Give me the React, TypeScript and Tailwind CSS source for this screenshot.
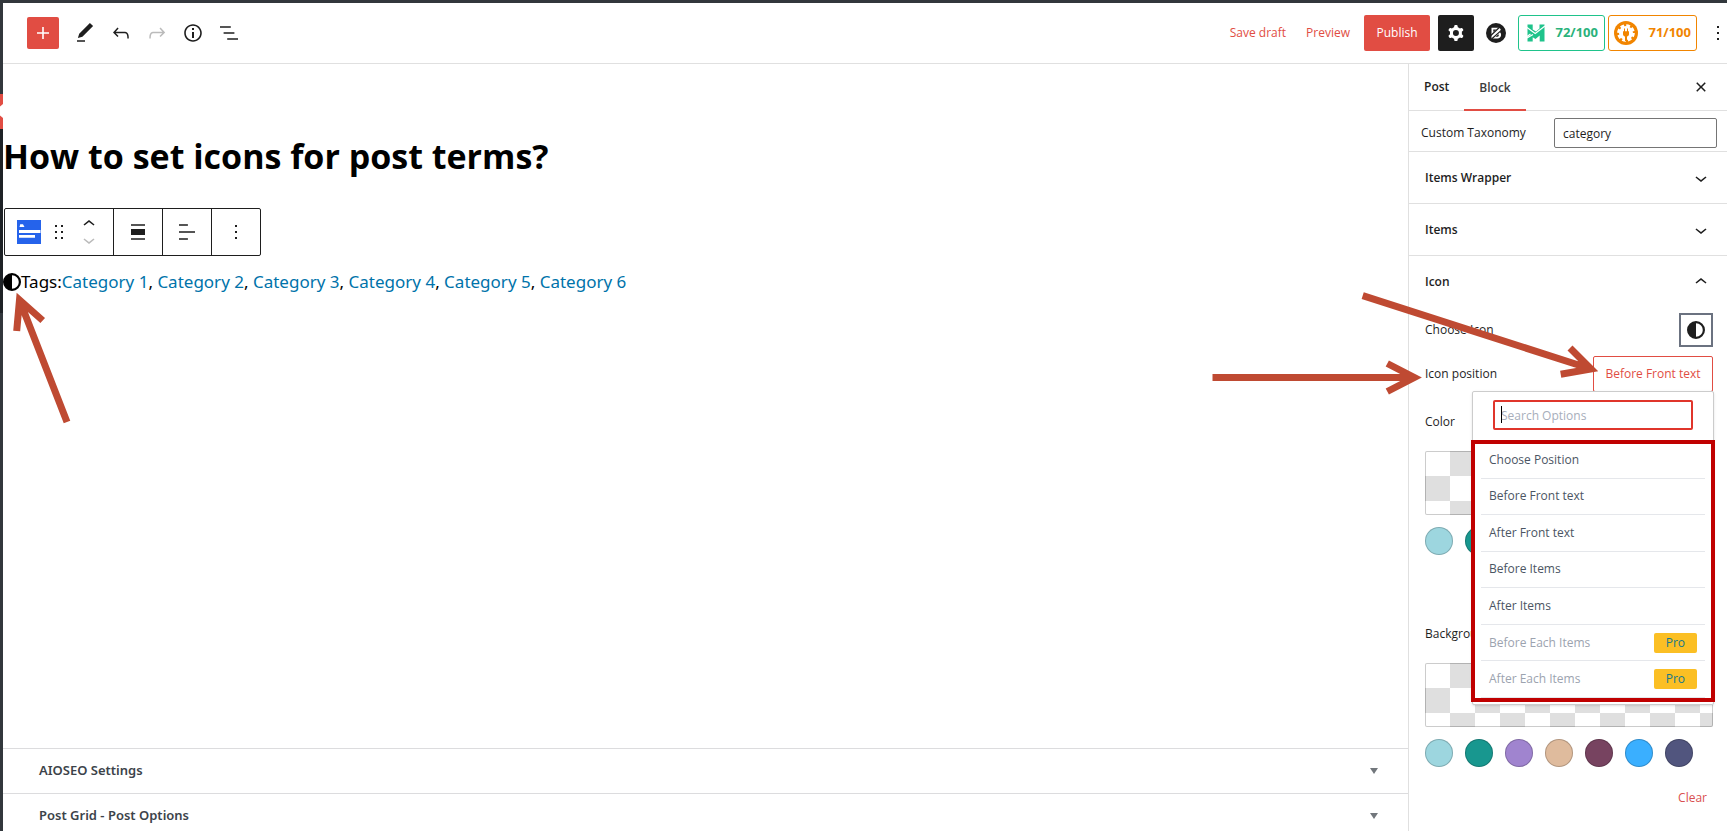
import { useState, type ReactNode } from "react";

const paths = {
  plus: "M18 11.2h-5.2V6h-1.6v5.2H6v1.6h5.2V18h1.6v-5.2H18z",
  edit: "M20.1 5.1L16.9 2 6.2 12.7l-1.3 4.4 4.5-1.3L20.1 5.1zM4 20.8h8v-1.5H4v1.5z",
  undo: "M18.3 11.7c-.6-.6-1.4-.9-2.3-.9H6.7l2.9-3.3-1.1-1-4.5 5L8.5 16l1-1-2.7-2.7H16c.5 0 .9.2 1.3.5 1 1 1 3.4 1 4.5v.3h1.5v-.2c0-1.5 0-4.3-1.5-5.7z",
  redo: "M15.6 6.5l-1.1 1 2.9 3.3H8c-.9 0-1.7.3-2.3.9-1.4 1.5-1.4 4.2-1.4 5.6v.2h1.5v-.3c0-1.1 0-3.5 1-4.5.3-.3.7-.5 1.3-.5h9.2L14.5 15l1.1 1.1 4.6-4.6-4.6-5z",
  info: "M12 3.2c-4.8 0-8.8 3.9-8.8 8.8 0 4.8 3.9 8.8 8.8 8.8 4.8 0 8.8-3.9 8.8-8.8 0-4.8-4-8.8-8.8-8.8zm0 16c-4 0-7.2-3.3-7.2-7.2C4.8 8 8 4.8 12 4.8s7.2 3.3 7.2 7.2c0 4-3.2 7.2-7.2 7.2zM11 17h2v-6h-2v6zm0-8h2V7h-2v2z",
  list: "M13.8 5.2H3v1.5h10.8V5.2zm-3.6 12v1.5H21v-1.5H10.2zm7.2-6H6.6v1.5h10.8v-1.5z",
  cog: "M10.289 4.836A1 1 0 0111.275 4h1.306a1 1 0 01.987.836l.244 1.466c.787.26 1.503.679 2.108 1.218l1.393-.522a1 1 0 011.216.437l.653 1.13a1 1 0 01-.23 1.273l-1.148.944a6.025 6.025 0 010 2.435l1.149.946a1 1 0 01.23 1.272l-.653 1.13a1 1 0 01-1.216.437l-1.394-.522c-.605.54-1.32.958-2.108 1.218l-.244 1.466a1 1 0 01-.987.836h-1.306a1 1 0 01-.986-.836l-.244-1.466a5.995 5.995 0 01-2.108-1.218l-1.394.522a1 1 0 01-1.217-.436l-.653-1.131a1 1 0 01.23-1.272l1.149-.946a6.026 6.026 0 010-2.435l-1.148-.944a1 1 0 01-.23-1.272l.653-1.131a1 1 0 011.217-.437l1.393.522a5.994 5.994 0 012.108-1.218l.244-1.466zM14.929 12a3 3 0 11-6 0 3 3 0 016 0z",
  down: "M17.5 11.6L12 16l-5.5-4.4.9-1.2L12 14l4.5-3.6 1 1.2z",
  up: "M6.5 12.4L12 8l5.5 4.4-.9 1.2L12 10l-4.5 3.6-1-1.2z",
  drag: "M8 7h2V5H8v2zm0 6h2v-2H8v2zm0 6h2v-2H8v2zm6-14v2h2V5h-2zm0 8h2v-2h-2v2zm0 6h2v-2h-2v2z",
  alignNone: "M5 15h14V9H5v6zm0 4.8h14v-1.5H5v1.5zM5 4.2v1.5h14V4.2H5z",
  alignLeft: "M4 19.8h8.9v-1.5H4v1.5zm8.9-15.6H4v1.5h8.9V4.2zm-8.9 7v1.5h16v-1.5H4z",
  more: "M13 19h-2v-2h2v2zm0-6h-2v-2h2v2zm0-6h-2V5h2v2z",
  close: "M12 13.06l3.712 3.713 1.061-1.06L13.061 12l3.712-3.712-1.06-1.06L12 10.938 8.288 7.227l-1.061 1.06L10.939 12l-3.712 3.712 1.06 1.061L12 13.061z",
};

function Icon({ name, className = "size-6" }: { name: keyof typeof paths; className?: string }) {
  return (
    <svg viewBox="0 0 24 24" className={`shrink-0 ${className}`} fill="currentColor" aria-hidden="true">
      <path fillRule="evenodd" clipRule="evenodd" d={paths[name]} />
    </svg>
  );
}

function HalfCircle() {
  return (
    <svg viewBox="0 0 512 512" className="size-[18px] shrink-0" fill="currentColor" aria-hidden="true">
      <path d="M448 256c0-106-86-192-192-192V448c106 0 192-86 192-192zM0 256a256 256 0 1 1 512 0A256 256 0 1 1 0 256z" />
    </svg>
  );
}

function Tool({ name, label, className = "" }: { name: keyof typeof paths; label: string; className?: string }) {
  return (
    <button aria-label={label} className={`flex size-9 items-center justify-center ${className}`}>
      <Icon name={name} />
    </button>
  );
}

function TopBar() {
  return (
    <header className="flex h-[61px] shrink-0 items-center justify-between border-b border-[#e0e0e0] pl-6">
      <div className="flex items-center">
        <button aria-label="Add block" className="mr-2 flex size-8 items-center justify-center rounded-xs bg-[#e14d43] text-white">
          <Icon name="plus" />
        </button>
        <Tool name="edit" label="Tools" />
        <Tool name="undo" label="Undo" />
        <Tool name="redo" label="Redo" className="text-[#bbb]" />
        <Tool name="info" label="Details" />
        <Tool name="list" label="List view" />
      </div>
      <div className="-mr-[3px] flex items-center">
        <button className="px-2 text-[#e14d43]">Save draft</button>
        <button className="mx-1 px-2 text-[#e14d43]">Preview</button>
        <button className="ml-0.5 h-9 w-[66px] rounded-xs bg-[#e14d43] text-white">Publish</button>
        <button aria-label="Settings" className="ml-2 flex size-9 items-center justify-center rounded-xs bg-[#1e1e1e] text-white">
          <Icon name="cog" />
        </button>
        <button aria-label="Block library" className="mx-3 flex">
          <svg viewBox="0 0 20 20" className="size-5" aria-hidden="true">
            <circle cx="10" cy="10" r="10" fill="#1e1e1e" />
            <path fill="#fff" d="M5.500 4.800h6.500c2.800 0 3.600 2.800 1.900 4.400 2.300 1.800 1.200 6.300-2.500 6.300H5.500z" />
            <path d="M4 13.200L13.800 4M5.600 16L15.300 7.400" fill="none" stroke="#1e1e1e" strokeWidth="1.200" />
            <path d="M7.300 6.400v2.700l2.900-2.700zM9.600 13.700h1.900c1.300 0 1.700-1.600.9-2.500z" fill="#1e1e1e" />
          </svg>
        </button>
        <button className="flex h-9 w-[87px] items-center justify-between rounded-[3px] border border-[#1fc38b] pr-1.5 pl-2 text-[13px] font-bold text-[#2ab27b]">
          <svg viewBox="0 0 18 18" className="size-[18px]" aria-hidden="true">
            <path fill="#1fc38b" d="M.5.500h5.200v5L9 7.500 12.500 4.500V.5h5v17h-4.800v-6L8.500 15l-2.800-1.700v4.200H.500z" />
            <path fill="none" stroke="#fff" strokeWidth="1.200" d="M0 3.500L8.200 9.500 18 2M0 12.500l3.500-2.500M0 14l6-3.500" />
          </svg>
          72/100
        </button>
        <button className="mr-[9px] ml-[3px] flex h-9 w-[89px] items-center justify-between rounded-[3px] border border-[#f18500] pr-[5px] pl-[5px] text-[13px] font-bold text-[#f18500]">
          <svg viewBox="0 0 24 24" className="size-6" aria-hidden="true">
            <circle cx="12" cy="12" r="12" fill="#f18500" />
            <circle cx="12" cy="12" r="7" fill="#fff" />
            <circle cx="12" cy="12" r="7.500" fill="none" stroke="#fff" strokeWidth="2.600" strokeDasharray="3.800 2.090" />
            <path d="M10 7.500v2.700H9v3c0 1.300.9 2 2 2.200V20h2v-4.600c1.100-.2 2-.9 2-2.200v-3h-1V7.500h-1v2.700h-2V7.500z" fill="#f18500" />
          </svg>
          71/100
        </button>
        <button aria-label="Options" className="flex">
          <Icon name="more" />
        </button>
      </div>
    </header>
  );
}

function BlockToolbar() {
  return (
    <div role="toolbar" aria-label="Block tools" className="flex h-12 w-fit divide-x divide-[#1e1e1e] rounded-xs border border-[#1e1e1e]">
      <div className="flex w-[109px] items-center pl-3">
        <button aria-label="Post terms" className="flex">
          <svg viewBox="0 0 24 24" className="size-6" aria-hidden="true">
            <path fill="#2563eb" d="M0 0h24v24H0z" />
            <path fill="#fff" d="M2.500 7l.7-2.800h2.800l1.500 2.800zM2 10h21.500v3H2zM2 15h16v2.700H2z" />
          </svg>
        </button>
        <button aria-label="Drag" className="ml-1.5 flex">
          <Icon name="drag" />
        </button>
        <div className="ml-1.5 flex flex-col">
          <button aria-label="Move up" className="flex h-4 items-center">
            <Icon name="up" />
          </button>
          <button aria-label="Move down" className="flex h-4 items-center text-[#bbb]">
            <Icon name="down" />
          </button>
        </div>
      </div>
      <button aria-label="Align" className="flex w-[49px] items-center justify-center"><Icon name="alignNone" /></button>
      <button aria-label="Align text" className="flex w-[49px] items-center justify-center"><Icon name="alignLeft" /></button>
      <button aria-label="More" className="flex w-12 items-center justify-center"><Icon name="more" /></button>
    </div>
  );
}

const categories = ["Category 1", "Category 2", "Category 3", "Category 4", "Category 5", "Category 6"];

function Editor() {
  return (
    <main className="flex min-h-0 min-w-0 flex-1 flex-col">
      <div className="min-h-0 flex-1 overflow-hidden">
        <h1 className="mt-16 text-[34px] leading-[56px] font-bold text-black">How to set icons for post terms?</h1>
        <div className="mt-6 ml-px">
          <BlockToolbar />
        </div>
        <p className="mt-3 flex items-center font-['Noto_Sans',sans-serif] text-[17px] leading-7 text-black">
          <HalfCircle />
          <span>
            Tags:
            {categories.map((c, i) => (
              <span key={c}>
                {i > 0 && ", "}
                <a href="#" className="text-[#0073aa]">{c}</a>
              </span>
            ))}
          </span>
        </p>
      </div>
      <div className="max-h-[83px] shrink-0 overflow-hidden">
        {["AIOSEO Settings", "Post Grid - Post Options"].map((t) => (
          <button key={t} className="flex h-[45px] w-full items-center justify-between border-t border-[#dcdcde] pr-[30px] pl-9 font-['Noto_Sans',sans-serif] text-[13px] font-semibold text-[#3c434a]">
            {t}
            <svg viewBox="0 0 8 6" className="h-1.5 w-2" fill="#72777c" aria-hidden="true">
              <path d="M0 0h8L4 6z" />
            </svg>
          </button>
        ))}
      </div>
    </main>
  );
}

function PanelTitle({ children, open = false }: { children: ReactNode; open?: boolean }) {
  return (
    <button className="flex h-[52px] w-full items-center justify-between pr-3.5 pl-4 font-semibold">
      {children}
      <Icon name={open ? "up" : "down"} />
    </button>
  );
}

const swatches = ["bg-[#9dd6df]", "bg-[#18978f]", "bg-[#a084cf]", "bg-[#dfbb9d]", "bg-[#774360]", "bg-[#3aafff]", "bg-[#51557e]"];

function ColorField({ label }: { label: string }) {
  return (
    <section>
      <h3 className="leading-5">{label}</h3>
      <button
        aria-label={`${label} picker`}
        className="mt-[19px] block h-16 w-full rounded-xs border border-black/20 bg-[repeating-conic-gradient(#dfdfdf_0_25%,#ffffff_0_50%)] bg-[length:50px_50px] bg-origin-border"
      />
      <div className="mt-3 flex gap-3">
        {swatches.map((s) => (
          <button key={s} aria-label={s.slice(4, -1)} className={`size-7 rounded-full border border-black/20 ${s}`} />
        ))}
      </div>
      <div className="mt-[13px] flex h-9 items-center justify-end pr-1.5">
        <button className="text-[#d94f4f]">Clear</button>
      </div>
    </section>
  );
}

const options = [
  { label: "Choose Position" },
  { label: "Before Front text" },
  { label: "After Front text" },
  { label: "Before Items" },
  { label: "After Items" },
  { label: "Before Each Items", pro: true },
  { label: "After Each Items", pro: true },
];

function PositionMenu() {
  return (
    <div className="absolute top-[35px] -right-px z-10 w-[242px] rounded-xs border border-[#ccc] bg-white pb-1.5 shadow-sm">
      <div className="relative px-5 pt-2 pb-3">
        <input
          aria-label="Search Options"
          placeholder="Search Options"
          className="block h-[30px] w-full rounded-xs border-2 border-[#e0352b] px-1.5 placeholder:text-[#a7aebb] focus:outline-none"
        />
        <span className="absolute top-3.5 left-7 h-[17px] w-px bg-black" />
      </div>
      <ul className="grid h-64 grid-rows-7 px-2">
        {options.map((o) => (
          <li key={o.label} className="border-b border-[#e5e7eb]">
            <button disabled={o.pro} className={`flex size-full items-center justify-between px-2 ${o.pro ? "text-[#9ca3af]" : "text-[#4b5563]"}`}>
              {o.label}
              {o.pro && <span className="rounded-xs bg-[#fbbf24] px-3 leading-5 text-[#15788c]">Pro</span>}
            </button>
          </li>
        ))}
      </ul>
      <div className="pointer-events-none absolute top-12 -right-0.5 -left-0.5 h-[262px] border-4 border-[#c00000]" />
    </div>
  );
}

function Sidebar() {
  const [taxonomy, setTaxonomy] = useState("category");
  return (
    <aside className="w-[319px] shrink-0 border-l border-[#e0e0e0]">
      <div className="flex h-[47px] items-stretch border-b border-[#e0e0e0] pr-3.5">
        <button className="px-[15px] font-semibold">Post</button>
        <button className="-mb-px border-b-2 border-[#e14d43] px-[15px] pt-0.5 font-semibold text-[#3c3c3c]">Block</button>
        <button aria-label="Close settings" className="ml-auto flex items-center">
          <Icon name="close" />
        </button>
      </div>
      <div className="divide-y divide-[#e0e0e0]">
        <div className="flex h-[41px] items-center justify-between pt-1 pr-2.5 pl-3">
          <label htmlFor="taxonomy">Custom Taxonomy</label>
          <input
            id="taxonomy"
            value={taxonomy}
            onChange={(e) => setTaxonomy(e.target.value)}
            className="h-[30px] w-[163px] rounded-xs border border-[#757575] px-2"
          />
        </div>
        <PanelTitle>Items Wrapper</PanelTitle>
        <PanelTitle>Items</PanelTitle>
        <div>
          <PanelTitle open>Icon</PanelTitle>
          <div className="pr-3.5 pl-4">
            <div className="mt-[5px] flex h-[34px] items-center justify-between">
              <span>Choose Icon</span>
              <button aria-label="Choose icon" className="flex size-[34px] items-center justify-center border-2 border-[#6b7280]">
                <HalfCircle />
              </button>
            </div>
            <div className="relative mt-[9px] flex h-9 items-center justify-between">
              <span>Icon position</span>
              <button className="h-9 w-[120px] rounded-xs border border-[#e14d43] text-[#e14d43]">Before Front text</button>
              <PositionMenu />
            </div>
            <div className="mt-5 grid gap-5">
              <ColorField label="Color" />
              <ColorField label="Background" />
            </div>
          </div>
        </div>
      </div>
    </aside>
  );
}

function AdminEdge() {
  return (
    <div className="flex w-[3px] shrink-0 flex-col bg-[#32373c]">
      <div className="h-[91px]" />
      <svg viewBox="0 0 3 35" className="h-[35px] w-[3px]" aria-hidden="true">
        <path fill="#e14d43" d="M0 0h3v35H0z" />
        <path fill="#fff" d="M3 10v14L0 21.500v-9z" />
      </svg>
      <div className="h-[184px] bg-[#1e2226]" />
    </div>
  );
}

function Pointers() {
  return (
    <>
      <svg viewBox="10 285 64 144" className="pointer-events-none absolute top-[285px] left-2.5 z-20 h-36 w-16" fill="none" stroke="#bf4a32" strokeWidth="7" aria-hidden="true">
        <path d="M67 422L19.500 300M16.700 331L19.500 300L42.700 320.500" />
      </svg>
      <svg viewBox="1212 290 390 110" className="pointer-events-none absolute top-[290px] right-[125px] z-20 h-[110px] w-[390px]" fill="none" stroke="#bf4a32" strokeWidth="7" aria-hidden="true">
        <path d="M1212.500 377.500H1414M1387.300 363.500L1414.300 377.500L1387.300 391.500" />
        <path d="M1362.700 295.700L1591 369M1570 348L1591 369L1560.700 374.300" />
      </svg>
    </>
  );
}

export default function App() {
  return (
    <div className="relative flex h-screen overflow-hidden border-t-[3px] border-[#32373c] bg-white font-['Open_Sans','Noto_Sans',sans-serif] text-[12px] text-[#1e1e1e]">
      <AdminEdge />
      <div className="flex min-w-0 flex-1 flex-col">
        <TopBar />
        <div className="flex min-h-0 flex-1">
          <Editor />
          <Sidebar />
        </div>
      </div>
      <div className="pointer-events-none absolute -top-[3px] right-0 left-0">
        <Pointers />
      </div>
    </div>
  );
}
